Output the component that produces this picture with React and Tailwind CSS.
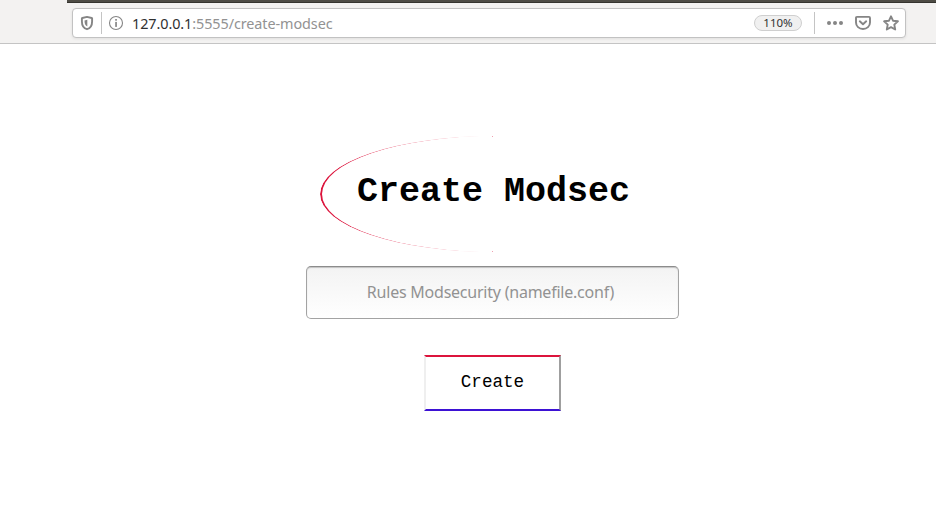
import React from "react";

function ShieldIcon() {
  return (
    <svg className="h-4 w-[14px] shrink-0" viewBox="0 0 14 16" fill="none">
      <path d="M7 1.900 2.300 3 1.900 3.300V6.500c0 4 1.500 6.700 5.100 7.700 3.600-1 5.100-3.700 5.100-7.700V3.300L11.700 3Z" stroke="#858585" strokeWidth="1.900" strokeLinejoin="round" />
      <path d="M7.300 4.800 4.500 5.400c0 3 .6 4.700 2.800 6.100Z" fill="#858585" />
    </svg>
  );
}

function InfoIcon() {
  return (
    <svg className="h-4 w-4 shrink-0" viewBox="0 0 16 16" fill="none">
      <circle cx="8" cy="8" r="6.500" stroke="#858585" strokeWidth="1.100" />
      <rect x="7.200" y="4" width="1.700" height="1.700" fill="#858585" />
      <rect x="7.200" y="6.900" width="1.700" height="5" fill="#858585" />
    </svg>
  );
}

function DotsIcon() {
  return (
    <svg className="h-4 w-4 shrink-0" viewBox="0 0 16 16" fill="#858585">
      <circle cx="2" cy="8" r="2" />
      <circle cx="8" cy="8" r="2" />
      <circle cx="14" cy="8" r="2" />
    </svg>
  );
}

function PocketIcon() {
  return (
    <svg className="h-4 w-4 shrink-0" viewBox="0 0 16 16" fill="none" stroke="#858585" strokeWidth="1.900" strokeLinecap="round" strokeLinejoin="round">
      <path d="M2 1.900h12c.7 0 1 .4 1 1v4.600c0 3.800-3 6.500-7 6.500s-7-2.700-7-6.500V2.900c0-.6.3-1 1-1Z" />
      <path d="m4.800 6.300 3.200 3 3.200-3" />
    </svg>
  );
}

function StarIcon() {
  return (
    <svg className="h-4 w-4 shrink-0" viewBox="0 0 16 16" fill="none" stroke="#858585" strokeWidth="1.900" strokeLinejoin="round">
      <path d="m8 1.300 2 4.400 4.900.6-3.600 3.300.9 4.900L8 12.200l-4.200 2.300.9-4.900L1.100 6.300 6 5.700Z" />
    </svg>
  );
}

function Toolbar() {
  return (
    <header className="flex h-11 flex-col border-b border-[#c4c4c4] bg-[#f3f2f1]">
      <div className="ml-[67px] h-[3px] shrink-0 border-b border-[#35342f] bg-[#4e4c45]" />
      <div className="mt-[5px] ml-[72px] flex h-[30px] w-[834px] shrink-0 items-center rounded-[4px] border border-[#c2c2c2] bg-white pr-[6px] pl-[7px] shadow-[0_1px_3px_rgba(0,0,0,0.08)]">
        <ShieldIcon />
        <div className="ml-[7px] h-[22px] w-px bg-[#c4c4c4]" />
        <div className="ml-[6px] flex"><InfoIcon /></div>
        <div className="ml-[8px] pt-px font-['Noto_Sans',sans-serif] text-[14.4px] leading-5 tracking-[-0.08px] whitespace-nowrap text-[#929292]">
          <span className="text-[#303030]">127.0.0.1</span>:5555/create-modsec
        </div>
        <div className="ml-auto flex h-4 w-12 items-center justify-center rounded-full border border-[#cfcfcf] bg-[#f0f0f0] font-['Noto_Sans',sans-serif] text-[11.5px] leading-none text-[#303030]">
          110%
        </div>
        <div className="mr-3 ml-3 h-[22px] w-px bg-[#c4c4c4]" />
        <div className="flex gap-3">
          <DotsIcon />
          <PocketIcon />
          <StarIcon />
        </div>
      </div>
    </header>
  );
}

export default function App() {
  return (
    <div className="h-[527px] w-[936px] overflow-hidden bg-white">
      <Toolbar />
      <main className="flex flex-col items-center pt-[92px] pl-[49px]">
        <h1 className="relative flex h-[116px] w-[345px] items-center justify-center pb-[4px] pl-[2px] font-['Liberation_Mono',monospace] text-[35px] leading-none font-bold whitespace-nowrap text-black">
          <span className="absolute inset-0 rounded-[50%] border-l-2 border-[#dc143c] [mask-image:linear-gradient(to_right,#000_0px,#000_100px,rgba(0,0,0,0.6)_140px,transparent_160px)]" />
          <span className="absolute top-0 left-[172px] size-px bg-[#f0a0b0]" />
          <span className="absolute bottom-0 left-[172px] size-px bg-[#f0a0b0]" />
          Create Modsec
        </h1>
        <input
          type="text"
          placeholder="Rules Modsecurity (namefile.conf)"
          className="mt-[14px] h-[53px] w-[373px] rounded-[5px] border border-[#a3a3a3] border-t-[#8c8c8c] bg-linear-to-b from-[#f3f3f3] to-white pr-1 pb-px text-center font-['Noto_Sans',sans-serif] text-[16px] tracking-[-0.23px] text-[#929292] shadow-[inset_0_1px_1px_rgba(0,0,0,0.2)] outline-none placeholder:text-[#929292]"
        />
        <button className="mt-9 h-14 w-[137px] border-2 border-t-[#dc143c] border-r-[#9f9f9f] border-b-[#3d12d4] border-l-[#efefef] bg-white font-['Liberation_Mono',monospace] text-[17.6px] leading-none text-black">
          Create
        </button>
      </main>
    </div>
  );
}
